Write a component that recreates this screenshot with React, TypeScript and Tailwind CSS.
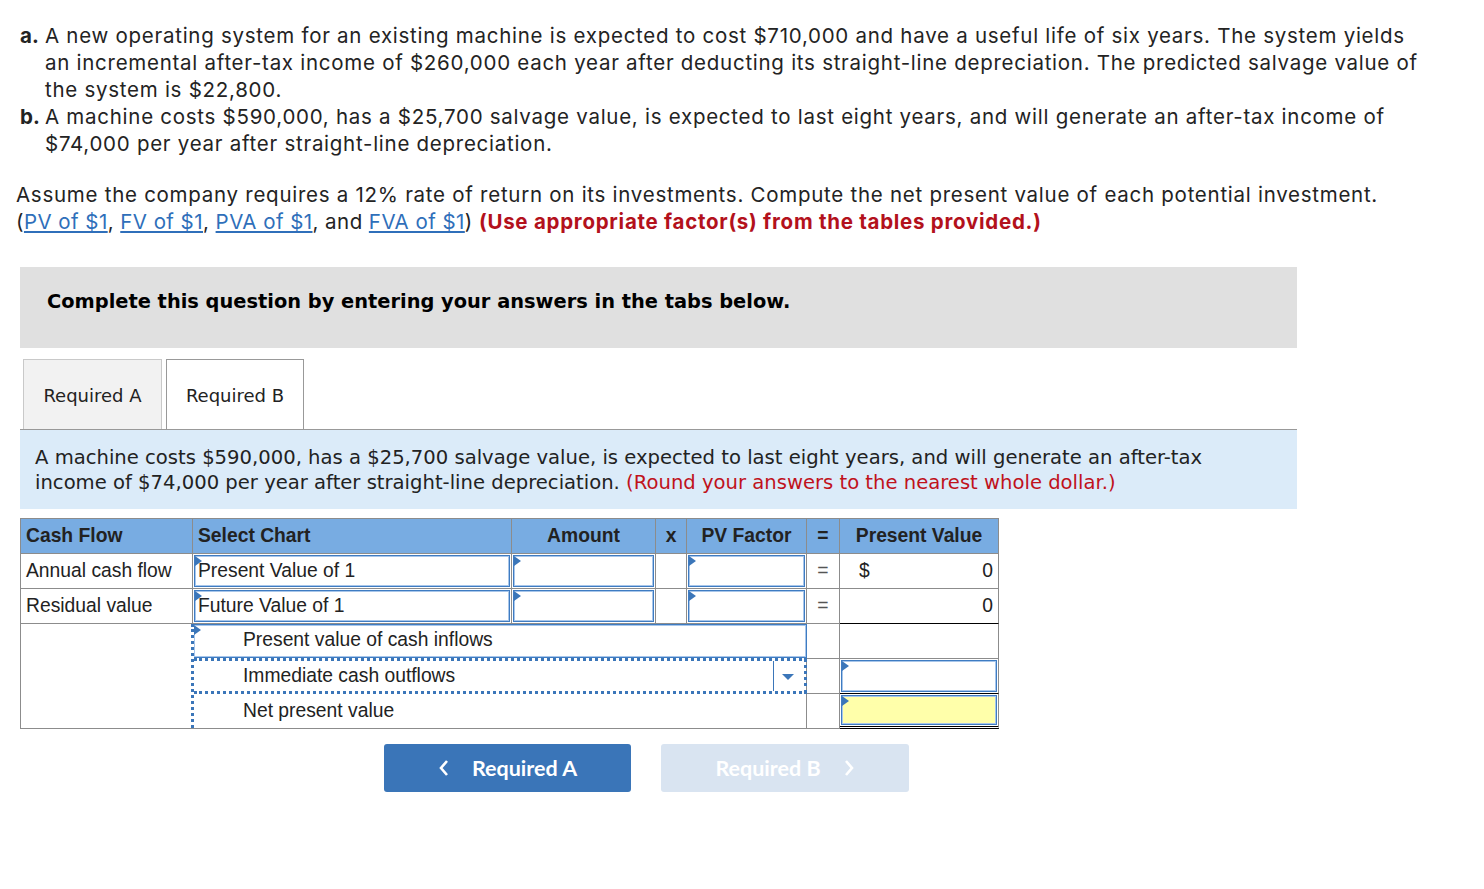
import React from "react";

const Tri = () => (
  <span className="absolute left-0 top-0 h-0 w-0 border-y-[5px] border-y-transparent border-l-[7px] border-l-[#3b76b9]" />
);

const InputBox = ({ yellow, children }: { yellow?: boolean; children?: React.ReactNode }) => (
  <div
    className={
      "relative m-px h-[calc(100%-2px)] border border-[#3f7cc2] shadow-[inset_0_0_0_1px_#a8c6ea] " +
      (yellow ? "bg-[#ffffaa]" : "bg-white")
    }
  >
    <Tri />
    {children}
  </div>
);

export default function App() {
  const head = "flex items-center border-r border-b border-[#8c8c8c] bg-[#78ace2] font-bold text-[#222]";
  const cell = "border-r border-b border-[#8c8c8c]";
  return (
    <div className="h-[889px] w-[1484px] bg-white font-['Inter',sans-serif] text-[#232323]">
      <div className="px-[20px] pt-[22px] text-[20.5px] leading-[27px] tracking-[0.73px]">
        <div className="flex">
          <span className="w-[25px] shrink-0 font-bold tracking-normal">a.</span>
          <p className="whitespace-nowrap">
            A new operating system for an existing machine is expected to cost $710,000 and have a useful life of six years. The system yields
            <br />
            an incremental after-tax income of $260,000 each year after deducting its straight-line depreciation. The predicted salvage value of
            <br />
            the system is $22,800.
          </p>
        </div>
        <div className="flex">
          <span className="w-[25px] shrink-0 font-bold tracking-normal">b.</span>
          <p className="whitespace-nowrap">
            A machine costs $590,000, has a $25,700 salvage value, is expected to last eight years, and will generate an after-tax income of
            <br />
            $74,000 per year after straight-line depreciation.
          </p>
        </div>
        <p className="mt-[24px] -ml-[4px] whitespace-nowrap">
          Assume the company requires a 12% rate of return on its investments. Compute the net present value of each potential investment.
          <br />
          <span className="tracking-[0.45px]">
            (<span className="text-[#2f6fba] underline">PV of $1</span>,{" "}
            <span className="text-[#2f6fba] underline">FV of $1</span>,{" "}
            <span className="text-[#2f6fba] underline">PVA of $1</span>, and{" "}
            <span className="text-[#2f6fba] underline">FVA of $1</span>){" "}
          </span>
          <span className="font-bold text-[#b3111c]">(Use appropriate factor(s) from the tables provided.)</span>
        </p>
      </div>

      <div className="ml-[20px] mt-[32px] w-[1277px]">
        <div className="h-[81px] bg-[#e0e0e0] pl-[27px] pt-[20px] font-['DejaVu_Sans',sans-serif] text-[19.4px] font-bold text-black">
          Complete this question by entering your answers in the tabs below.
        </div>

        <div className="mt-[11px] flex h-[71px] items-end border-b border-[#999] pl-[3px] font-['DejaVu_Sans',sans-serif] text-[18px] text-[#222]">
          <div className="flex h-[70px] w-[139px] items-center justify-center border-x border-t border-[#c9c9c9] bg-[#f2f2f2] pt-[1px]">
            Required A
          </div>
          <div className="ml-[4px] flex h-[70px] w-[138px] items-center justify-center border-x border-t border-[#999] bg-white pt-[1px]">
            Required B
          </div>
        </div>

        <div className="h-[79px] whitespace-nowrap bg-[#dbebf9] pl-[15px] pt-[15px] font-['DejaVu_Sans',sans-serif] text-[19.6px] leading-[25px] text-[#222]">
          A machine costs $590,000, has a $25,700 salvage value, is expected to last eight years, and will generate an after-tax
          <br />
          income of $74,000 per year after straight-line depreciation.{" "}
          <span className="text-[#c0121c]">(Round your answers to the nearest whole dollar.)</span>
        </div>
      </div>

      <div className="ml-[20px] mt-[9px] grid w-[979px] grid-cols-[172px_319px_144px_31px_120px_33px_159px] grid-rows-[35px_35px_35px_35px_35px_35px] border-l border-t border-[#8c8c8c] font-['Liberation_Sans',Arial,sans-serif] text-[19.3px] text-[#222]">
        <div className={head + " pl-[5px]"}>Cash Flow</div>
        <div className={head + " pl-[5px]"}>Select Chart</div>
        <div className={head + " justify-center"}>Amount</div>
        <div className={head + " justify-center"}>x</div>
        <div className={head + " justify-center"}>PV Factor</div>
        <div className={head + " justify-center"}>=</div>
        <div className={head + " justify-center"}>Present Value</div>

        <div className={cell + " flex items-center pl-[5px]"}>Annual cash flow</div>
        <div className={cell}>
          <InputBox>
            <span className="absolute left-[3px] top-[1px]">Present Value of 1</span>
          </InputBox>
        </div>
        <div className={cell}>
          <InputBox />
        </div>
        <div className={cell} />
        <div className={cell}>
          <InputBox />
        </div>
        <div className={cell + " flex items-center justify-center text-[#555]"}>=</div>
        <div className={cell + " flex items-center justify-between pl-[19px] pr-[5px]"}>
          <span>$</span>
          <span>0</span>
        </div>

        <div className={cell + " flex items-center pl-[5px]"}>Residual value</div>
        <div className={cell}>
          <InputBox>
            <span className="absolute left-[3px] top-[1px]">Future Value of 1</span>
          </InputBox>
        </div>
        <div className={cell}>
          <InputBox />
        </div>
        <div className={cell} />
        <div className={cell}>
          <InputBox />
        </div>
        <div className={cell + " flex items-center justify-center text-[#555]"}>=</div>
        <div className="flex items-center justify-end border-r border-b border-r-[#8c8c8c] border-b-black pr-[5px]">0</div>

        <div className="row-span-3 border-b border-[#8c8c8c]" />
        <div className="col-span-4 row-span-3 -ml-[2px] border-b border-[#8c8c8c]">
          <div className="flex h-full flex-col border-l-[3px] border-dotted border-[#3b76b9]">
            <div className="relative h-[34px] border-r border-t border-b border-solid border-[#3f7cc2] shadow-[inset_0_0_0_1px_#a8c6ea]">
              <Tri />
              <span className="absolute left-[49px] top-[1px]">Present value of cash inflows</span>
            </div>
            <div className="relative flex h-[36px] items-center border-y-[3px] border-r-[3px] border-dotted border-[#3b76b9]">
              <span className="pl-[49px]">Immediate cash outflows</span>
              <span className="ml-auto h-full w-px bg-[#3b76b9]" />
              <svg width="30" height="10" viewBox="0 0 30 10" className="shrink-0">
                <polygon points="8,3 20,3 14,9" fill="#3b76b9" />
              </svg>
            </div>
            <div className="flex flex-1 items-center pl-[49px]">Net present value</div>
          </div>
        </div>
        <div className="border-x border-b border-[#8c8c8c] -ml-px" />
        <div className={cell} />
        <div className="border-x border-b border-[#8c8c8c] -ml-px" />
        <div className="border-r border-b border-r-[#8c8c8c] border-b-black">
          <InputBox />
        </div>
        <div className="border-x border-b border-[#8c8c8c] -ml-px" />
        <div className="border-r border-b-[3px] border-double border-r-[#8c8c8c] border-b-black">
          <InputBox yellow />
        </div>
      </div>

      <div className="ml-[384px] mt-[15px] flex gap-[30px] font-['Lato',sans-serif] text-[21.5px] font-bold text-white">
        <div className="flex h-[48px] w-[247px] items-center justify-center gap-[22px] rounded-[3px] bg-[#3a75b8]">
          <svg width="12" height="18" viewBox="0 0 12 18">
            <polyline points="9,2 3,9 9,16" fill="none" stroke="white" strokeWidth="2.6" />
          </svg>
          <span>Required A</span>
        </div>
        <div className="flex h-[48px] w-[248px] items-center justify-center gap-[22px] rounded-[3px] bg-[#d9e4f1]">
          <span>Required B</span>
          <svg width="12" height="18" viewBox="0 0 12 18">
            <polyline points="3,2 9,9 3,16" fill="none" stroke="white" strokeWidth="2.6" />
          </svg>
        </div>
      </div>
    </div>
  );
}
